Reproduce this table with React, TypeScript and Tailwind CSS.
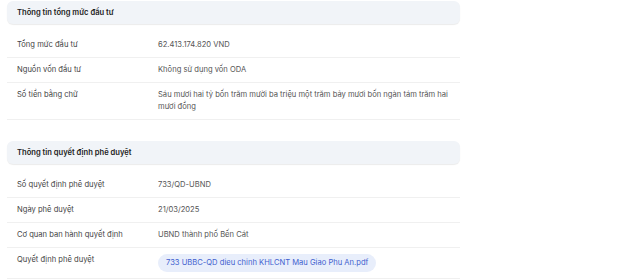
type Row = {
  label: string;
  value: string;
  link?: boolean;
};

const investRows: Row[] = [
  { label: 'Tổng mức đầu tư', value: '62.413.174.820 VND' },
  { label: 'Nguồn vốn đầu tư', value: 'Không sử dụng vốn ODA' },
  {
    label: 'Số tiền bằng chữ',
    value:
      'Sáu mươi hai tỷ bốn trăm mười ba triệu một trăm bảy mươi bốn ngàn tám trăm hai mươi đồng',
  },
];

const decisionRows: Row[] = [
  { label: 'Số quyết định phê duyệt', value: '733/QD-UBND' },
  { label: 'Ngày phê duyệt', value: '21/03/2025' },
  { label: 'Cơ quan ban hành quyết định', value: 'UBND thành phố Bến Cát' },
  {
    label: 'Quyết định phê duyệt',
    value: '733 UBBC-QD dieu chinh KHLCNT Mau Giao Phu An.pdf',
    link: true,
  },
];

const Section = ({ title, rows }: { title: string; rows: Row[] }) => (
  <div className="flex flex-col">
    <div className="h-[23px] flex items-center px-[10px] rounded-md bg-[#f1f4f8] shadow-[0_1px_1px_rgba(0,0,0,0.08)]">
      <p className="text-[7.6px] font-semibold text-[#222]">{title}</p>
    </div>

    <div className="mt-[9px] flex flex-col">
      {rows.map((row) => (
        <div
          key={row.label}
          className="flex items-start border-b border-[#f0f0f0] px-[10px] py-[6px] text-[7.6px] leading-[12px]"
        >
          <p className="w-[141px] shrink-0 text-[#444]">{row.label}</p>
          {row.link ? (
            <div className="flex-1 -my-[3px] py-[3px]">
              <a className="inline-block rounded-full bg-[#e8eefb] px-[8px] py-[3px] text-[#3f5fcf]">
                {row.value}
              </a>
            </div>
          ) : (
            <p className="flex-1 pr-[2px] text-[#555]">{row.value}</p>
          )}
        </div>
      ))}
    </div>
  </div>
);

const App = () => {
  return (
    <div
      className="w-[640px] h-[279px] bg-white overflow-hidden"
      style={{ fontFamily: 'Inter, "Noto Sans", sans-serif' }}
    >
      <div className="w-[453px] ml-[7px] pt-[1px] flex flex-col gap-[21px]">
        <Section title="Thông tin tổng mức đầu tư" rows={investRows} />
        <Section title="Thông tin quyết định phê duyệt" rows={decisionRows} />
      </div>
    </div>
  );
};

export default App;
